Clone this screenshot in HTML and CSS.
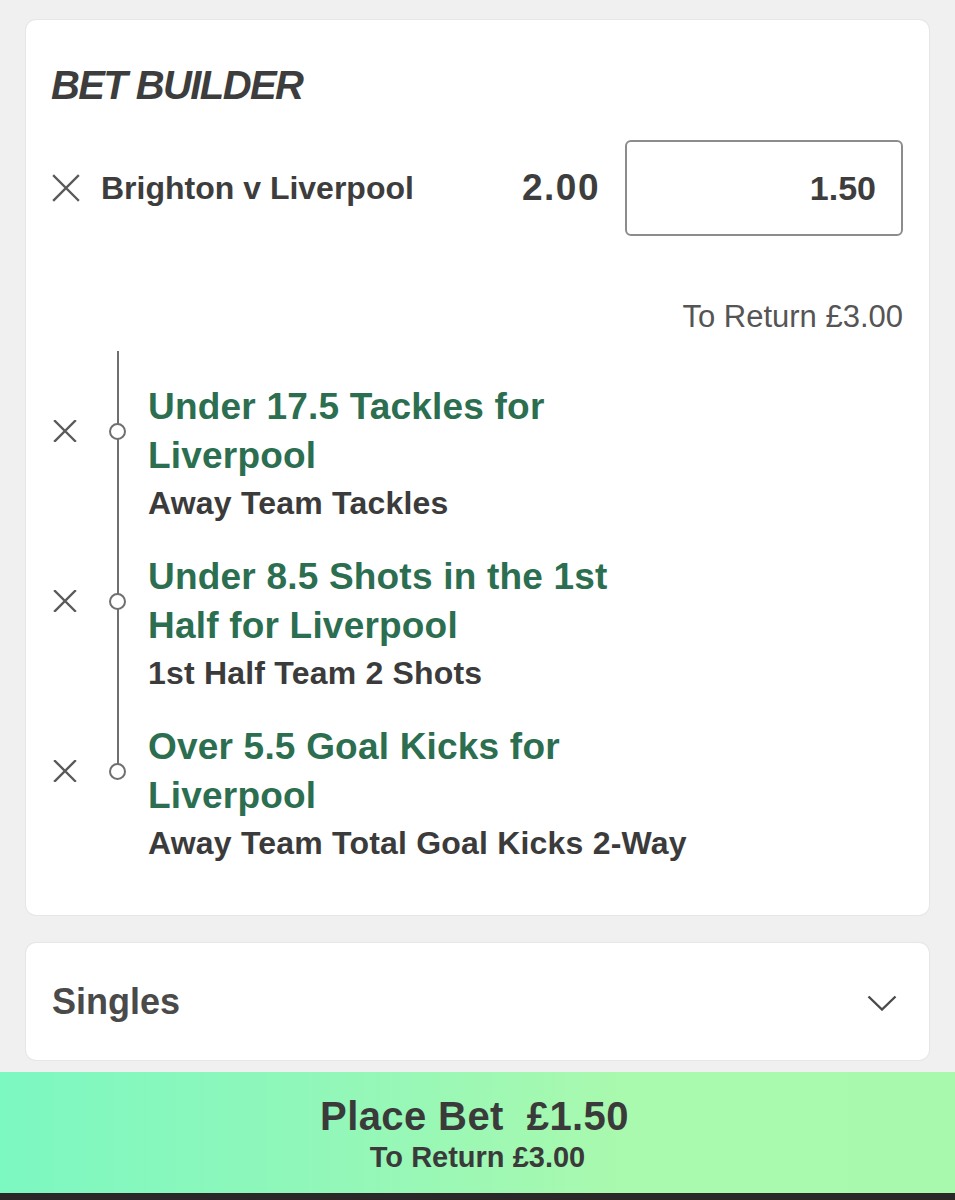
FILE: index.html
```html
<!DOCTYPE html>
<html lang="en">
<head>
<meta charset="utf-8">
<title>Bet Builder</title>
<link rel="stylesheet" href="styles.css">
</head>
<body>
<main class="slip">
  <section class="card builder">
    <h1 class="heading">BET BUILDER</h1>
    <div class="event-row">
      <svg class="x-icon x-lg" viewBox="0 0 28 28" aria-hidden="true"><path d="M2 2 L26 26 M26 2 L2 26"/></svg>
      <span class="event-name">Brighton v Liverpool</span>
      <span class="odds">2.00</span>
      <div class="stake">1.50</div>
    </div>
    <div class="to-return">To Return £3.00</div>

    <div class="legs">
      <div class="lead-rail"><span class="rail"></span></div>

      <div class="leg">
        <svg class="x-icon x-sm" viewBox="0 0 24 22" aria-hidden="true"><path d="M2 1 L22 21 M22 1 L2 21"/></svg>
        <div class="rail rail-dot"><span class="dot"></span></div>
        <div class="leg-title">Under 17.5 Tackles for<br>Liverpool</div>
        <div class="rail-empty"></div>
        <div class="rail"></div>
        <div class="leg-sub">Away Team Tackles</div>
      </div>

      <div class="leg">
        <svg class="x-icon x-sm" viewBox="0 0 24 22" aria-hidden="true"><path d="M2 1 L22 21 M22 1 L2 21"/></svg>
        <div class="rail rail-dot"><span class="dot"></span></div>
        <div class="leg-title">Under 8.5 Shots in the 1st<br>Half for Liverpool</div>
        <div class="rail-empty"></div>
        <div class="rail"></div>
        <div class="leg-sub">1st Half Team 2 Shots</div>
      </div>

      <div class="leg leg-last">
        <svg class="x-icon x-sm" viewBox="0 0 24 22" aria-hidden="true"><path d="M2 1 L22 21 M22 1 L2 21"/></svg>
        <div class="rail rail-dot rail-end"><span class="dot"></span></div>
        <div class="leg-title">Over 5.5 Goal Kicks for<br>Liverpool</div>
        <div class="rail-empty"></div>
        <div class="rail-empty"></div>
        <div class="leg-sub">Away Team Total Goal Kicks 2-Way</div>
      </div>
    </div>
  </section>

  <section class="card singles">
    <span class="singles-label">Singles</span>
    <svg class="chevron" viewBox="0 0 30 16" aria-hidden="true"><polyline points="1.5,1.5 15,14.5 28.5,1.5"/></svg>
  </section>
</main>

<footer class="place-bet">
  <div class="place-main">Place Bet&nbsp;&nbsp;£1.50</div>
  <div class="place-sub">To Return £3.00</div>
</footer>
<div class="home-bar"></div>
</body>
</html>
```

FILE: styles.css
```css
html, body {
  margin: 0;
  padding: 0;
}

body {
  background: #f0f0f0;
  font-family: "Liberation Sans", Arial, sans-serif;
  color: #3b3b3b;
  width: 955px;
  height: 1200px;
  overflow: hidden;
}

.slip {
  padding-top: 20px;
}

.card {
  background: #ffffff;
  margin: 0 26px;
  border-radius: 10px;
  box-shadow: 0 0 0 1px #e6e6e6;
}

.builder {
  padding: 41px 26px 52px 25px;
}

.heading {
  margin: 0;
  font-size: 40px;
  line-height: 48px;
  font-style: italic;
  font-weight: 700;
  letter-spacing: -1.6px;
  color: #3d3d3d;
}

.event-row {
  display: flex;
  align-items: center;
  margin-top: 31px;
}

.x-icon {
  flex: none;
  fill: none;
  stroke: #5a5a5a;
  stroke-width: 2.4;
  stroke-linecap: square;
}

.x-lg {
  width: 28px;
  height: 28px;
  margin-left: 1px;
}

.event-name {
  margin-left: 21px;
  font-size: 32px;
  font-weight: 700;
  color: #3d3d3d;
  flex: 1;
}

.odds {
  font-size: 37px;
  font-weight: 700;
  letter-spacing: 1.5px;
  color: #3d3d3d;
  margin-right: 25px;
}

.stake {
  box-sizing: border-box;
  width: 278px;
  height: 96px;
  border: 2px solid #8c8c8c;
  border-radius: 6px;
  display: flex;
  align-items: center;
  justify-content: flex-end;
  padding-right: 25px;
  font-size: 34px;
  font-weight: 700;
  color: #3d3d3d;
}

.to-return {
  margin-top: 63px;
  text-align: right;
  font-size: 31px;
  line-height: 36px;
  color: #555555;
}

.legs {
  margin-top: 16px;
}

.lead-rail {
  display: grid;
  grid-template-columns: 28px 69px 1fr;
  height: 31px;
}

.lead-rail .rail {
  grid-column: 2;
}

.leg {
  display: grid;
  grid-template-columns: 28px 69px 1fr;
  grid-template-rows: auto auto;
}

.rail {
  background: linear-gradient(#6f6f6f, #6f6f6f) no-repeat 38px 0 / 2px 100%;
}

.rail-dot {
  display: flex;
  align-items: center;
}

.rail-end {
  background-size: 2px 50%;
}

.dot {
  box-sizing: border-box;
  width: 17px;
  height: 17px;
  margin-left: 30px;
  border: 2px solid #6f6f6f;
  border-radius: 50%;
  background: #ffffff;
}

.x-sm {
  width: 24px;
  height: 22px;
  align-self: center;
  margin-left: 2px;
}

.leg-title {
  font-size: 37px;
  line-height: 49px;
  font-weight: 700;
  letter-spacing: 0.2px;
  color: #2c6e50;
}

.leg-sub {
  margin-top: 3px;
  padding-bottom: 29px;
  font-size: 32px;
  line-height: 40px;
  font-weight: 700;
  letter-spacing: 0.2px;
  color: #3b3b3b;
}

.leg-last .leg-sub {
  padding-bottom: 0;
}

.singles {
  margin-top: 28px;
  height: 117px;
  box-sizing: border-box;
  padding: 0 32px 0 26px;
  display: flex;
  align-items: center;
  justify-content: space-between;
}

.singles-label {
  font-size: 36px;
  font-weight: 700;
  color: #4a4a4a;
}

.chevron {
  width: 30px;
  height: 16px;
  fill: none;
  stroke: #4a4a4a;
  stroke-width: 2.4;
  margin-top: 2px;
}

.place-bet {
  margin-top: 12px;
  height: 121px;
  box-sizing: border-box;
  padding-top: 22px;
  background: linear-gradient(90deg, #7cf8c1 0%, #92f7b9 35%, #a9f9ae 65%, #a8f9ae 100%);
  display: flex;
  flex-direction: column;
  align-items: center;
}

.place-main {
  font-size: 40px;
  line-height: 44px;
  font-weight: 700;
  letter-spacing: 0.4px;
  color: #3a3a3a;
  margin-right: 6px;
}

.place-sub {
  margin-top: 3px;
  font-size: 29px;
  line-height: 32px;
  font-weight: 700;
  color: #3a3a3a;
}

.home-bar {
  height: 7px;
  background: #2b2628;
}
```
